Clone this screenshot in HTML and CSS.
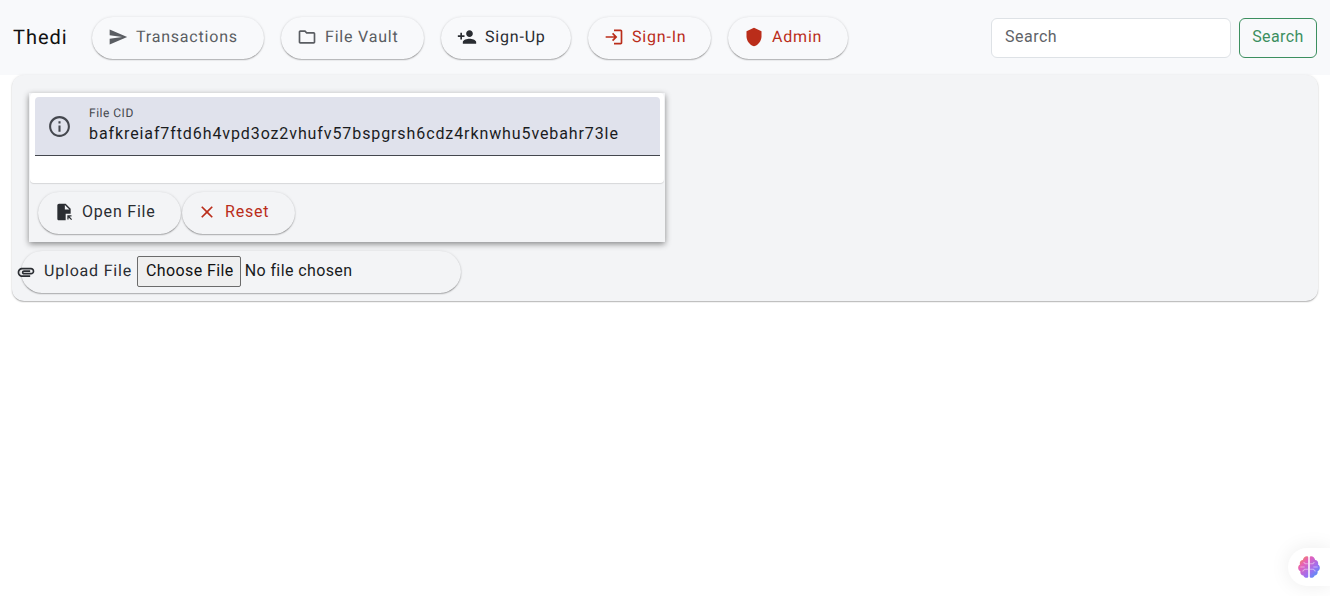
FILE: index.html
```html
<!DOCTYPE html>
<html lang="en">
<head>
    <meta charset="UTF-8">
    <meta name="viewport" content="width=device-width, initial-scale=1.0">
    <title>Thedi</title>
    <link rel="stylesheet" href="styles.css">
</head>
<body>

    <!-- Top bar -->
    <header class="topbar">
        <span class="brand">Thedi</span>
        <nav class="nav-links">
            <a class="pill pill-muted nav-transactions" href="#">
                <svg class="icon" viewBox="0 0 24 24"><path d="M2.01 21 23 12 2.01 3 2 10l15 2-15 2z"/></svg>
                Transactions
            </a>
            <a class="pill pill-muted nav-vault" href="#">
                <svg class="icon" viewBox="0 0 24 24"><path d="M9.17 6l2 2H20v10H4V6h5.17M10 4H4c-1.1 0-1.99.9-1.99 2L2 18c0 1.1.9 2 2 2h16c1.1 0 2-.9 2-2V8c0-1.1-.9-2-2-2h-8l-2-2z"/></svg>
                File Vault
            </a>
            <a class="pill nav-signup" href="#">
                <svg class="icon" viewBox="0 0 24 24"><path d="M15 12c2.21 0 4-1.79 4-4s-1.79-4-4-4-4 1.79-4 4 1.79 4 4 4zm-9-2V7H4v3H1v2h3v3h2v-3h3v-2H6zm9 4c-2.67 0-8 1.34-8 4v2h16v-2c0-2.66-5.33-4-8-4z"/></svg>
                Sign-Up
            </a>
            <a class="pill pill-red nav-signin" href="#">
                <svg class="icon" viewBox="0 0 24 24"><path d="M11 7 9.6 8.4l2.6 2.6H2v2h10.2l-2.6 2.6L11 17l5-5-5-5zm9 12h-8v2h8c1.1 0 2-.9 2-2V5c0-1.1-.9-2-2-2h-8v2h8v14z"/></svg>
                Sign-In
            </a>
            <a class="pill pill-red nav-admin" href="#">
                <svg class="icon" viewBox="0 0 24 24"><path d="M12 1 3 5v6c0 5.55 3.84 10.74 9 12 5.16-1.26 9-6.45 9-12V5l-9-4z"/></svg>
                Admin
            </a>
        </nav>
        <form class="search">
            <input class="search-input" type="text" placeholder="Search">
            <button class="search-btn" type="button">Search</button>
        </form>
    </header>

    <!-- Main card -->
    <main class="panel">
        <section class="file-card">
            <div class="file-top">
                <div class="file-field">
                    <svg class="icon icon-info" viewBox="0 0 24 24"><path d="M11 7h2v2h-2zm0 4h2v6h-2zm1-9C6.48 2 2 6.48 2 12s4.48 10 10 10 10-4.48 10-10S17.52 2 12 2zm0 18c-4.41 0-8-3.59-8-8s3.59-8 8-8 8 3.59 8 8-3.59 8-8 8z"/></svg>
                    <div class="field-text">
                        <label class="field-label" for="cid">File CID</label>
                        <input class="field-value" id="cid" type="text" value="bafkreiaf7ftd6h4vpd3oz2vhufv57bspgrsh6cdz4rknwhu5vebahr73le">
                    </div>
                </div>
            </div>
            <div class="file-actions">
                <button class="pill btn-open" type="button">
                    <svg class="icon" viewBox="0 0 24 24"><path d="M14 2H6c-1.1 0-2 .9-2 2v16c0 1.1.9 2 2 2h8v-8h6V8l-6-6zm-1 7V3.5L18.5 9H13z"/><path d="M16 16h5v1.500h-2.400l3.100 3.100-1.100 1.100-3.100-3.100V21H16z"/></svg>
                    Open File
                </button>
                <button class="pill pill-red btn-reset" type="button">
                    <svg class="icon" viewBox="0 0 24 24"><path d="M19 6.410 17.590 5 12 10.590 6.410 5 5 6.410 10.590 12 5 17.590 6.410 19 12 13.410 17.590 19 19 17.590 13.410 12z"/></svg>
                    Reset
                </button>
            </div>
        </section>
        <div class="upload">
            <svg class="icon icon-clip" viewBox="0 0 24 24"><path d="M2 12.500C2 9.460 4.460 7 7.500 7H18c2.210 0 4 1.790 4 4s-1.790 4-4 4H9.500C8.120 15 7 13.880 7 12.500S8.120 10 9.500 10H17v2H9.410c-.55 0-.55 1 0 1H18c1.100 0 2-.9 2-2s-.9-2-2-2H7.500C5.570 9 4 10.570 4 12.500S5.570 16 7.500 16H17v2H7.500C4.460 18 2 15.540 2 12.500z"/></svg>
            <span class="upload-label">Upload File</span>
            <input class="upload-input" type="file">
        </div>
    </main>

    <!-- Floating widget -->
    <div class="brain-tab">
        <svg class="brain" viewBox="0 0 24 24">
            <defs>
                <linearGradient id="brainGrad" x1="0" y1="0" x2="1" y2="1">
                    <stop offset="0" stop-color="#f7a035"/>
                    <stop offset=".3" stop-color="#e760b8"/>
                    <stop offset=".65" stop-color="#9b70f2"/>
                    <stop offset="1" stop-color="#35a2f6"/>
                </linearGradient>
            </defs>
            <path fill="url(#brainGrad)" d="M11.300 3.200v17.600c0 .7-.6 1.200-1.300 1.200-1.600 0-2.700-.9-3.200-2.200-1.600-.1-2.800-1.400-2.800-3 0-.3 0-.6.1-.8C2.900 15.400 2 14.100 2 12.600c0-1.300.7-2.400 1.700-3-.1-.3-.2-.7-.2-1.100 0-1.600 1.200-2.900 2.800-3C6.800 3.600 8.200 2 10 2c.7 0 1.300.5 1.300 1.200zM12.700 3.200C12.700 2.500 13.300 2 14 2c1.800 0 3.200 1.600 3.700 3.500 1.600.1 2.800 1.400 2.800 3 0 .4-.1.800-.2 1.100 1 .6 1.700 1.700 1.700 3 0 1.500-.9 2.800-2.100 3.400.1.200.1.500.1.800 0 1.600-1.200 2.900-2.800 3-.5 1.300-1.600 2.200-3.200 2.200-.7 0-1.300-.5-1.300-1.200z"/>
            <path class="brain-lines" d="M11 9H8.500L7 7.500M11 14H8l-2 2M4 12h4M13 9h2.500L17 7.500M13 14h3l2 2M20 12h-4"/>
        </svg>
    </div>

</body>
</html>
```

FILE: styles.css
```css
/* Basic reset */
* {
    box-sizing: border-box;
}

body {
    margin: 0;
    height: 596px;
    overflow: hidden;
    background-color: #ffffff;
    color: #1a1c1e;
    font-family: Roboto, "Liberation Sans", sans-serif;
    font-size: 16px;
    text-rendering: geometricPrecision;
}

.icon {
    width: 20px;
    height: 20px;
    fill: currentColor;
    flex-shrink: 0;
}

/* Pills shared by nav and card buttons */
.pill {
    display: flex;
    align-items: center;
    gap: 8px;
    height: 42px;
    padding: 0 16px 2px;
    border: 0;
    border-radius: 21px;
    background-color: inherit;
    box-shadow: 0 1px 2px -1px rgba(0, 0, 0, 0.85), 0 0 3px rgba(0, 0, 0, 0.1);
    color: #2a2d32;
    font-family: inherit;
    font-size: 16px;
    letter-spacing: 0.8px;
    text-decoration: none;
}

.pill-muted {
    color: #5a5d62;
}

.pill-red {
    color: #ba2d1a;
}

/* Top bar */
.topbar {
    display: flex;
    align-items: center;
    height: 75px;
    padding: 0 13px;
    background-color: #f8f9fb;
}

.brand {
    width: 79px;
    padding-bottom: 2px;
    font-size: 20px;
    letter-spacing: 1px;
    color: #111111;
}

.nav-links {
    display: flex;
    gap: 17px;
    background-color: #f8f9fb;
}

.nav-transactions { width: 172px; }
.nav-vault { width: 143px; }
.nav-signup { width: 130px; }
.nav-signin { width: 123px; }
.nav-admin { width: 120px; }

.search {
    display: flex;
    gap: 8px;
    margin-left: auto;
}

.search-input {
    width: 240px;
    height: 40px;
    padding: 0 13px 2px;
    border: 1px solid #dee2e6;
    border-radius: 6px;
    background-color: #ffffff;
    font-family: inherit;
    font-size: 16px;
    letter-spacing: 0.5px;
}

.search-input::placeholder {
    color: #5f6368;
}

.search-btn {
    width: 78px;
    height: 40px;
    padding: 0 0 2px;
    border: 1px solid #3c8f5f;
    border-radius: 6px;
    background: transparent;
    color: #3c8f5f;
    font-family: inherit;
    font-size: 16px;
    letter-spacing: 0.4px;
}

/* Main card */
.panel {
    margin: 0 12px;
    height: 226px;
    padding: 18px 9px 0;
    border-radius: 12px;
    background-color: #f3f4f6;
    box-shadow: 0 1px 2px -1px rgba(0, 0, 0, 0.85), 0 0 3px rgba(0, 0, 0, 0.08);
}

.file-card {
    width: 636px;
    height: 149px;
    margin-left: 8px;
    background-color: #f3f4f6;
    box-shadow: 0 2px 6px rgba(0, 0, 0, 0.45);
}

.file-top {
    height: 90px;
    margin: 0 1px;
    padding: 4px 4px 0 5px;
    border-radius: 4px;
    background-color: #ffffff;
    box-shadow: 0 1px 1px rgba(0, 0, 0, 0.12);
}

.file-field {
    display: flex;
    align-items: center;
    gap: 17px;
    height: 59px;
    padding: 0 12px;
    border-bottom: 1px solid #44474e;
    border-radius: 4px 4px 0 0;
    background-color: #e0e2ec;
    color: #44474e;
}

.icon-info {
    width: 25px;
    height: 25px;
}

.field-text {
    display: flex;
    flex-direction: column;
    flex: 1;
}

.field-label {
    margin: -1px 0 1px;
    font-size: 12px;
    letter-spacing: 0.5px;
    line-height: 16px;
}

.field-value {
    padding: 0;
    border: 0;
    outline: 0;
    background: transparent;
    color: #1a1c1e;
    font-family: inherit;
    font-size: 16px;
    letter-spacing: 0.9px;
    line-height: 24px;
}

.file-actions {
    display: flex;
    gap: 1px;
    padding: 9px 0 0 9px;
}

.file-actions .pill {
    padding-bottom: 4px;
}

.file-actions .icon {
    margin-top: 2px;
}

.btn-open { width: 143px; }
.file-actions .btn-reset { width: 113px; padding-left: 15px; }

.upload {
    display: flex;
    align-items: center;
    width: 440px;
    height: 42px;
    margin-top: 9px;
    border-radius: 21px;
    box-shadow: 0 1px 2px -1px rgba(0, 0, 0, 0.85), 0 0 3px rgba(0, 0, 0, 0.1);
    color: #2a2d32;
    font-size: 16px;
    letter-spacing: 0.8px;
}

.icon-clip {
    margin-left: -5px;
}

.upload-label {
    margin: 0 5px 4px 8px;
}

.upload-input {
    margin-bottom: 2px;
    color: #1a1c1e;
    font-family: inherit;
    font-size: 16px;
    letter-spacing: 0.4px;
}

.upload-input::file-selector-button {
    height: 31px;
    margin-right: 4px;
    padding: 0 6px 2px 8px;
    border: 1px solid #6b6b6b;
    border-radius: 2px;
    background-color: #efefef;
    color: #111111;
    font-family: inherit;
    font-size: 16px;
    letter-spacing: 0.4px;
}

/* Floating widget, sits over the page */
.brain-tab {
    position: absolute;
    right: 0;
    bottom: 10px;
    display: flex;
    align-items: center;
    width: 42px;
    height: 38px;
    padding-left: 8px;
    border-radius: 19px 0 0 19px;
    background-color: #ffffff;
    box-shadow: 0 0 20px rgba(0, 0, 0, 0.08);
}

.brain {
    width: 26px;
    height: 26px;
}

.brain-lines {
    fill: none;
    stroke: #ffffff;
    stroke-opacity: 0.45;
    stroke-width: 1;
}
```
